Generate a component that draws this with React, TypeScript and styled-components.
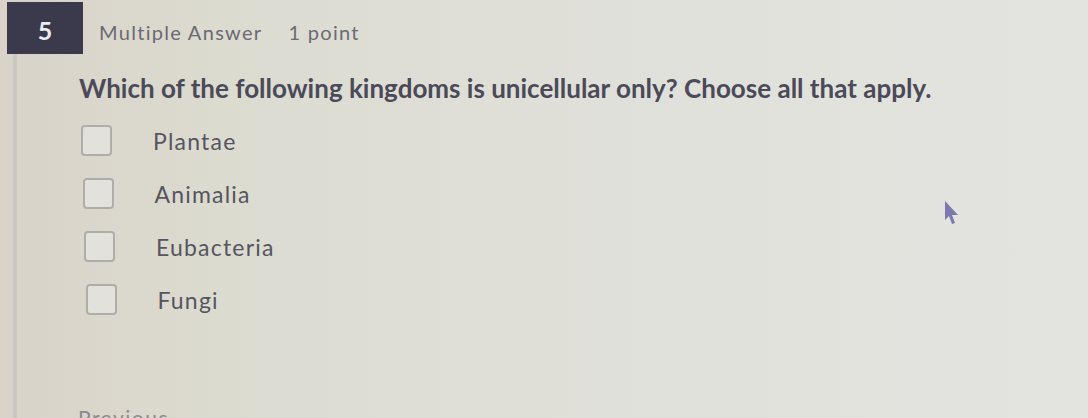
import styled, { createGlobalStyle } from "styled-components";

const GlobalStyle = createGlobalStyle`
  html, body {
    margin: 0;
    padding: 0;
    width: 1088px;
    height: 418px;
    overflow: hidden;
  }
  body {
    font-family: Lato, "Liberation Sans", sans-serif;
    background: linear-gradient(90deg, #d9d3c9 0%, #dcdbd0 20%, #dfdfd8 45%, #e2e2dd 75%, #e3e3df 100%);
  }
`

const Page = styled.div`
  position: relative;
  height: 418px;
  display: flex;
  flex-direction: column;
`

const Header = styled.div`
  display: flex;
  align-items: center;
  height: 53px;
  margin-top: 1px;
`

const Badge = styled.div`
  width: 76px;
  height: 52px;
  margin-left: 7px;
  background: #3b3a4d;
  color: #ececf0;
  font-size: 25px;
  font-weight: 700;
  display: flex;
  align-items: center;
  justify-content: center;
  padding-top: 4px;
  box-sizing: border-box;
`

const Meta = styled.span<{ $gap?: number }>`
  margin-left: ${p => p.$gap ?? 16}px;
  color: #6a6a74;
  font-size: 20px;
  letter-spacing: 1.3px;
  padding-top: 8px;
`

const Body = styled.div`
  display: flex;
  flex: 1;
`

const Rail = styled.div`
  width: 4px;
  margin-left: 13px;
  background: #cbc8c2;
`

const Content = styled.div`
  padding-left: 62px;
  padding-top: 18px;
  display: flex;
  flex-direction: column;
`

const Question = styled.p`
  margin: 0 0 21px;
  color: #4a4a58;
  font-size: 26px;
  font-weight: 700;
  white-space: nowrap;
`

const Options = styled.ul`
  list-style: none;
  margin: 0;
  padding: 0;
  display: flex;
  flex-direction: column;
  gap: 22px;
`

const Option = styled.li<{ $shift: number }>`
  display: flex;
  align-items: center;
  height: 31px;
  padding-left: ${p => p.$shift}px;
`

const Box = styled.span`
  width: 31px;
  height: 31px;
  border: 2px solid #aeada8;
  border-radius: 4px;
  box-sizing: border-box;
  background: #e2e1dc;
`

const Label = styled.span`
  margin-left: 41px;
  color: #55555f;
  font-size: 23px;
  letter-spacing: 1.2px;
`

const Footer = styled.div`
  position: absolute;
  left: 78px;
  top: 405px;
  color: #8a8a8e;
  font-size: 21px;
  letter-spacing: 1.5px;
`

const Cursor = styled.svg`
  position: absolute;
  left: 944px;
  top: 200px;
`

export default function App() {
  const options = ["Plantae", "Animalia", "Eubacteria", "Fungi"]

  return (
    <>
      <GlobalStyle />
      <Page>
        <Header>
          <Badge>5</Badge>
          <Meta>Multiple Answer</Meta>
          <Meta $gap={26}>1 point</Meta>
        </Header>
        <Body>
          <Rail />
          <Content>
            <Question>Which of the following kingdoms is unicellular only? Choose all that apply.</Question>
            <Options>
              {options.map((name, i) => (
                <Option key={name} $shift={2 + i * 1.5}>
                  <Box />
                  <Label>{name}</Label>
                </Option>
              ))}
            </Options>
          </Content>
        </Body>
        <Footer>Previous</Footer>
        <Cursor width="16" height="26" viewBox="0 0 16 26">
          <path d="M1 1 L1 20 L5 16 L8 24 L11 23 L8 15 L14 15 Z" fill="#5a55a0" opacity="0.75" />
        </Cursor>
      </Page>
    </>
  );
}
